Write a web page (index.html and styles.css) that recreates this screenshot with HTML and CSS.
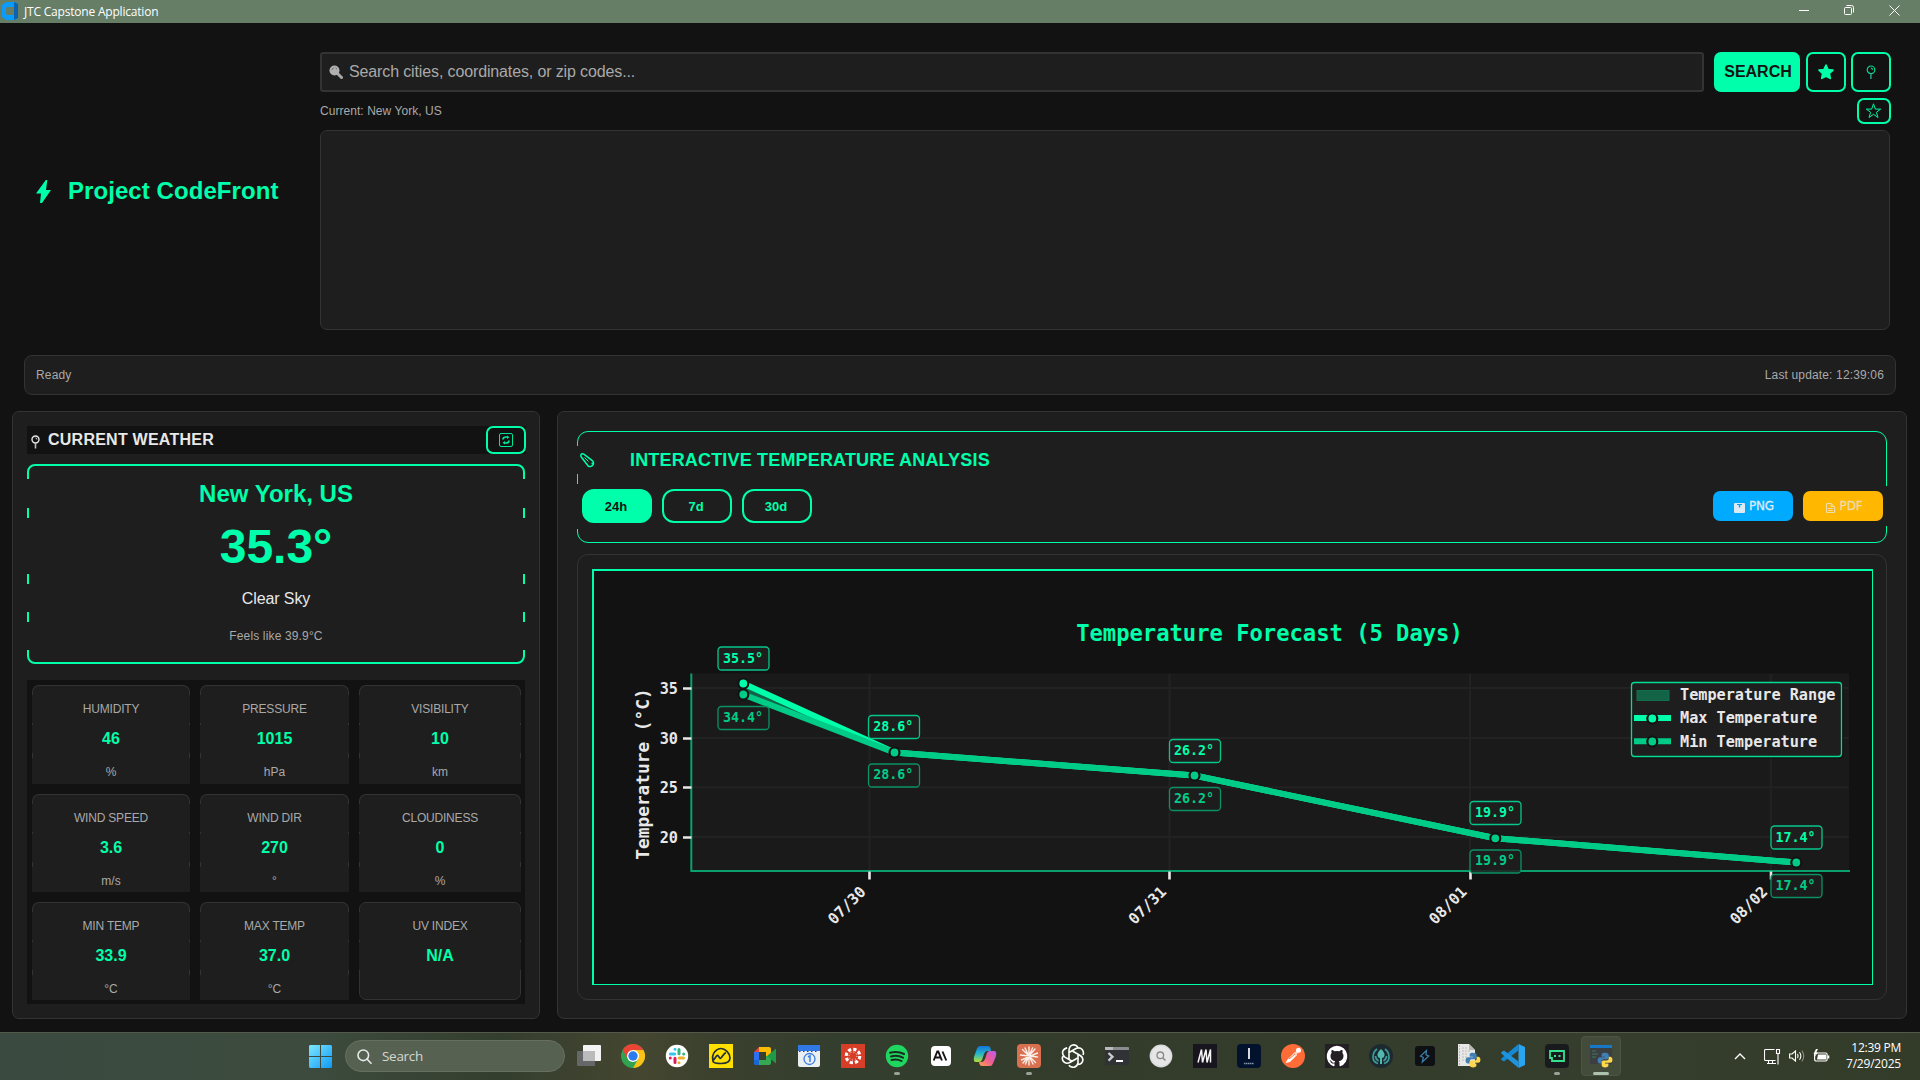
FILE: index.html
```html
<!DOCTYPE html>
<html lang="en">
<head>
<meta charset="utf-8">
<title>JTC Capstone Application</title>
<link rel="stylesheet" href="styles.css">
</head>
<body>
<div class="titlebar">
  <svg class="app-icon" width="16" height="20" viewBox="0 0 16 20"><path d="M4 1h9l3 2v14l-3 2H4l-4-3V4z" fill="#0a9bfb"/><path d="M12 1l4 2v14l-4 2z" fill="#0b62b0"/><path d="M5 6h7v8H5l-1-1V7z" fill="#667e66"/></svg>
  <span class="app-title">JTC Capstone Application</span>
  <div class="win-controls">
    <svg width="10" height="10" viewBox="0 0 10 10"><path d="M0 5.5h10" stroke="#fff"/></svg>
    <svg width="10" height="10" viewBox="0 0 10 10" fill="none" stroke="#fff"><rect x=".5" y="2.5" width="7" height="7" rx="1"/><path d="M2.5 .5h5a2 2 0 0 1 2 2v5"/></svg>
    <svg width="11" height="11" viewBox="0 0 11 11"><path d="M.5 .5l10 10M10.500 .5l-10 10" stroke="#fff"/></svg>
  </div>
</div>

<div class="app">
  <header class="header">
    <div class="brand">
      <svg width="15" height="23" viewBox="0 0 15 23"><path d="M9.800 0L0 13.500h5L4 23h2L15 10h-5L11.300 0z" fill="#00ffaa"/></svg>
      <span>Project CodeFront</span>
    </div>
    <div class="search-area">
      <div class="search-row">
        <div class="search-input">
          <svg width="14" height="14" viewBox="0 0 14 14"><path d="M8.500 8.500l4 4" stroke="#a8a8a8" stroke-width="3" stroke-linecap="round"/><circle cx="5.500" cy="5.500" r="5" fill="#b0b0b0"/><path d="M2.800 5a3 3 0 0 1 2-2.200M6.500 2.800l1.500 1.400" stroke="#666" fill="none"/></svg>
          <span>Search cities, coordinates, or zip codes...</span>
        </div>
        <button class="btn-search">SEARCH</button>
        <button class="icon-btn"><svg width="16" height="16" viewBox="0 0 16 16"><path d="M8 1l2.100 4.500 4.900.6-3.600 3.400.9 4.900L8 12.200l-4.300 2.200.9-4.900L1 6.100l4.900-.6z" fill="#00ffaa" stroke="#00ffaa" stroke-width="1.600" stroke-linejoin="round"/></svg></button>
        <button class="icon-btn pin"><svg width="10" height="15" viewBox="0 0 10 15" fill="none" stroke="#08d795"><circle cx="5" cy="4.800" r="3.800" stroke-width="1.200"/><path d="M5 3.200a1.500 1.500 0 0 1 1.500 1.500" stroke-width="1.300"/><path d="M4.900 8.600V14" stroke="#2fa083" stroke-width="1.500"/></svg></button>
      </div>
      <div class="current-row">
        <span>Current: New York, US</span>
        <button class="fav-btn"><svg width="16" height="16" viewBox="0 0 16 16"><path d="M7.500 .8l1.800 5.300h5.400l-4.300 3.200 1.600 5.200-4.500-3.200L3 14.500l1.600-5.200L.3 6.100h5.400z" fill="none" stroke="#00f5a4" stroke-width="1"/></svg></button>
      </div>
      <div class="results"></div>
    </div>
  </header>

  <div class="status"><span>Ready</span><span class="updated">Last update: 12:39:06</span></div>

  <main class="main">
    <section class="panel weather">
      <div class="weather-head">
        <svg width="10" height="14" viewBox="0 0 10 14" fill="none" stroke="#e8e8e8"><circle cx="4.500" cy="4.500" r="3.500" stroke-width="1.400"/><path d="M4.500 3a1.400 1.400 0 0 1 1.400 1.400" stroke-width="1"/><path d="M4.500 8v5.500" stroke-width="1.600" stroke="#bbb"/></svg>
        <span>CURRENT WEATHER</span>
        <button class="refresh"><svg width="14" height="14" viewBox="0 0 14 14" fill="none" stroke="#00e59a"><rect x=".5" y=".5" width="13" height="13" rx="1.500"/><path d="M4 6.500Q4 4 7 4h1.500M10 7.500Q10 10 7 10H5.500" stroke-width="1.700"/><path d="M8 2.500L10.500 4.200 8 6zM6 8L3.500 9.800 6 11.500z" fill="#00e59a" stroke="none"/></svg></button>
      </div>
      <div class="now-card">
        <div class="now-line city">New York, US</div>
        <div class="now-line temp">35.3°</div>
        <div class="now-line sky">Clear Sky</div>
        <div class="now-line feels">Feels like 39.9°C</div>
      </div>
      <div class="stats">
        <div class="stat"><div class="k">HUMIDITY</div><div class="v">46</div><div class="u">%</div></div>
        <div class="stat"><div class="k">PRESSURE</div><div class="v">1015</div><div class="u">hPa</div></div>
        <div class="stat"><div class="k">VISIBILITY</div><div class="v">10</div><div class="u">km</div></div>
        <div class="stat"><div class="k">WIND SPEED</div><div class="v">3.6</div><div class="u">m/s</div></div>
        <div class="stat"><div class="k">WIND DIR</div><div class="v">270</div><div class="u">°</div></div>
        <div class="stat"><div class="k">CLOUDINESS</div><div class="v">0</div><div class="u">%</div></div>
        <div class="stat"><div class="k">MIN TEMP</div><div class="v">33.9</div><div class="u">°C</div></div>
        <div class="stat"><div class="k">MAX TEMP</div><div class="v">37.0</div><div class="u">°C</div></div>
        <div class="stat"><div class="k">UV INDEX</div><div class="v">N/A</div></div>
      </div>
    </section>

    <section class="panel analysis">
      <div class="controls">
        <div class="controls-title">
          <svg width="17" height="16" viewBox="0 0 17 16" fill="none" stroke="#00ffaa"><path d="M1.300 1.200Q2.500 .3 3.800 1.200L12.300 7.600a3.300 3.300 0 1 1-4.300 5.200L1.300 4Q.4 2.500 1.300 1.200z" stroke-width="1.500"/><path d="M4.500 4.500l4 4" stroke-width="1"/><path d="M11.500 10.500h2" stroke-width="1.800"/></svg>
          <span>INTERACTIVE TEMPERATURE ANALYSIS</span>
        </div>
        <div class="controls-row">
          <div class="ranges">
            <button class="range on">24h</button><button class="range">7d</button><button class="range">30d</button>
          </div>
          <div class="exports">
            <button class="export png"><svg width="11" height="10" viewBox="0 0 11 10"><rect width="11" height="10" rx="1" fill="#dceaf4"/><path d="M3 1h5v1H6.200v2.500H4.800V2H3z" fill="#00a2f5"/></svg>PNG</button>
            <button class="export pdf"><svg width="9" height="10" viewBox="0 0 9 10" fill="none" stroke="#ecdcae"><path d="M.5 .5h4.800l3.200 3v6h-8z"/><path d="M5 .5v3h3M2.200 5.500h4.500M2.200 7.500h4.500"/></svg>PDF</button>
          </div>
        </div>
      </div>
      <div class="chart-frame">
        <div class="chart">
          <svg class="plot" width="1278" height="413" viewBox="594 571 1278 413">
            <rect x="691" y="673.500" width="1158" height="197.500" fill="#1a1a1a"/>
            <path class="grid" d="M869.500 674V871M1169.500 674V871M1470 674V871M1770.800 674V871M692 688H1849M692 738H1849M692 787.300H1849M692 837H1849"/>
            <path d="M743.300 683.500L894.500 752.500L743.300 694.500z" fill="#136346"/>
            <path class="series" stroke="#00ffaa" d="M743.300 683.500L894.500 752.500 1194.500 775.500 1495.300 838.300 1796.300 862.500"/>
            <circle class="dot" cx="743.300" cy="683.500" r="5" fill="#00ffaa"/>
            <path class="series" stroke="#00cc88" d="M743.300 694.500L894.500 752.500 1194.500 775.500 1495.300 838.300 1796.300 862.500"/>
            <g class="dot" fill="#00cc88"><circle cx="743.300" cy="694.500" r="5"/><circle cx="894.500" cy="752.500" r="5"/><circle cx="1194.500" cy="775.500" r="5"/><circle cx="1495.300" cy="838.300" r="5"/><circle cx="1796.300" cy="862.500" r="5"/></g>
            <path d="M691.300 673.500V871H1850" fill="none" stroke="#0aa06e" stroke-width="2"/>
            <path d="M683 688.500h8.500M683 738.500h8.500M683 787.500h8.500M683 837.500h8.500M869.500 871.500v8M1169.500 871.500v8M1470.500 871.500v8M1771 871.500v8" stroke="#e8e8e8" stroke-width="2.600"/>
            <g class="tick" text-anchor="end"><text x="678" y="693.800">35</text><text x="678" y="743.800">30</text><text x="678" y="793">25</text><text x="678" y="842.800">20</text></g>
            <g class="tick" text-anchor="middle"><text transform="translate(850.5 909) rotate(-45)">07/30</text><text transform="translate(1151 909) rotate(-45)">07/31</text><text transform="translate(1451.5 909) rotate(-45)">08/01</text><text transform="translate(1752.3 909) rotate(-45)">08/02</text></g>
            <text class="axis" text-anchor="middle" transform="translate(649 774) rotate(-90)">Temperature (°C)</text>
            <text class="chart-title" text-anchor="middle" x="1269.500" y="640.500">Temperature Forecast (5 Days)</text>
            <g class="tag hi">
              <rect x="718" y="647" width="51" height="23" rx="3.500"/><text x="743" y="663">35.5°</text>
              <rect x="868.500" y="715.500" width="51" height="23" rx="3.500"/><text x="893.200" y="731">28.6°</text>
              <rect x="1169.500" y="739.500" width="51" height="23" rx="3.500"/><text x="1194" y="755">26.2°</text>
              <rect x="1470" y="801.500" width="51" height="23" rx="3.500"/><text x="1495" y="817">19.9°</text>
              <rect x="1771" y="826" width="51" height="23" rx="3.500"/><text x="1795.500" y="842">17.4°</text>
            </g>
            <g class="tag lo">
              <rect x="718" y="706.500" width="51" height="23" rx="3.500"/><text x="743" y="722">34.4°</text>
              <rect x="868.500" y="764" width="51" height="23" rx="3.500"/><text x="893.200" y="779">28.6°</text>
              <rect x="1169.500" y="787.500" width="51" height="23" rx="3.500"/><text x="1194" y="803">26.2°</text>
              <rect x="1470" y="850" width="51" height="23" rx="3.500"/><text x="1495" y="865">19.9°</text>
              <rect x="1771" y="874.500" width="51" height="23" rx="3.500"/><text x="1795.500" y="890">17.4°</text>
            </g>
            <rect x="1633.500" y="684.500" width="210" height="74" rx="3" fill="#111"/>
            <rect x="1631.500" y="682.500" width="210" height="74" rx="3" fill="#1e1e1e" stroke="#00ffaa" stroke-opacity=".85" stroke-width="1.300"/>
            <rect x="1637" y="690.500" width="32" height="10" fill="#136346" stroke="#12704f"/>
            <path d="M1634 718h37" stroke="#00ffaa" stroke-width="6"/><path d="M1634 741.200h37" stroke="#00cc88" stroke-width="6"/>
            <g class="dot"><circle cx="1652.300" cy="718.500" r="5" fill="#00ffaa"/><circle cx="1652.300" cy="741.500" r="5" fill="#00cc88"/></g>
            <g class="tick"><text x="1680" y="699.800">Temperature Range</text><text x="1680" y="723">Max Temperature</text><text x="1680" y="746.800">Min Temperature</text></g>
          </svg>
        </div>
      </div>
    </section>
  </main>
</div>

<footer class="taskbar">
  <div class="start"><svg width="23" height="23" viewBox="0 0 23 23"><defs><linearGradient id="win" x1="0" y1="0" x2="1" y2="1"><stop offset="0" stop-color="#7ee6fd"/><stop offset="1" stop-color="#0f9af5"/></linearGradient></defs><path d="M1 0h10v11H0V1zM12 0h10l1 1v10H12zM0 12h11v11H1l-1-1zM12 12h11v10l-1 1H12z" fill="url(#win)"/></svg></div>
  <div class="task-search"><svg width="15" height="15" viewBox="0 0 15 15" fill="none" stroke="#e8eae8" stroke-width="1.600"><circle cx="6.300" cy="6.300" r="5.300"/><path d="M10 10l4 4.200" stroke-linecap="round"/></svg><span>Search</span></div>
  <div class="tasks">
    <div class="task"><svg viewBox="0 0 24 24"><rect x="0" y="7" width="18" height="15" rx="1" fill="#666768"/><rect x="6" y="1" width="18" height="16" rx="1" fill="#f3f3f3"/><rect x="6" y="7" width="12" height="10" fill="#bbb"/></svg></div>
    <div class="task"><svg viewBox="0 0 24 24"><circle cx="12" cy="12" r="12" fill="#31a350"/><path d="M1.600 6A12 12 0 0 1 22.400 6H12z" fill="#ea4434"/><path d="M22.400 6A12 12 0 0 1 12 24l5.200-9L12 6z" fill="#fbc116"/><path d="M1.600 6l5.200 9L12 6z" fill="#ea4434"/><circle cx="12" cy="12" r="6" fill="#fff"/><circle cx="12" cy="12" r="4.700" fill="#2a7bf0"/></svg></div>
    <div class="task"><svg viewBox="0 0 24 24"><circle cx="12" cy="12" r="11.200" fill="#fff"/><g stroke-width="3" stroke-linecap="round"><path d="M10 5.200v.1M5.400 10h4.300" stroke="#36c5f0"/><path d="M14 5.500v4.200M18.700 10v.1" stroke="#2eb67d"/><path d="M14.200 14h4.300M14 18.700v.1" stroke="#ecb22e"/><path d="M10 14.200v4.300M5.300 14v.1" stroke="#e01e5a"/></g></svg></div>
    <div class="task"><svg viewBox="0 0 24 24"><rect width="24" height="24" fill="#ffe000"/><path d="M4 17C2 9 8 4.500 12 4.500S21 9 21 14c0 4-4 5.500-9 5.500-4 0-8-.5-8-2.500zM4.500 16c2-2 3.300-6 4.800-4s1.700 3.500 3.500 1 2-3 3.500-4" fill="none" stroke="#23303a" stroke-width="1.700" stroke-linecap="round"/></svg></div>
    <div class="task"><svg viewBox="0 0 24 24"><path d="M6 3h10q2 0 2 2v7h-5V8H6z" fill="#fbbc04"/><path d="M1 8l5-5v5z" fill="#ea4335"/><path d="M1 8h5v13H3q-2 0-2-2z" fill="#2d6ff0"/><path d="M6 16h7v-4h5v7q0 2-2 2H6z" fill="#34a853"/><path d="M1 16h5v5H3q-2 0-2-2z" fill="#1967d2"/><path d="M14 12l9-7.500v15z" fill="#1f9a49"/></svg></div>
    <div class="task"><svg viewBox="0 0 24 24"><path d="M1 1h22v20q0 2-2 2H3q-2 0-2-2z" fill="#eceff1"/><path d="M1 1h22v6H1z" fill="#2f78e6"/><path d="M2 7.500h20" stroke="#28476f" stroke-dasharray="1.500 2.500"/><circle cx="12.500" cy="15" r="5.500" fill="none" stroke="#3b7ee2" stroke-width="1.300"/><path d="M11 13l2-1.200V18" fill="none" stroke="#3b7ee2" stroke-width="1.500"/></svg></div>
    <div class="task"><svg viewBox="0 0 24 24"><rect width="24" height="24" fill="#d63e28"/><circle cx="12" cy="12" r="6.800" fill="none" stroke="#fff" stroke-width="3" stroke-dasharray="3.300 2.040"/><circle cx="12" cy="12" r="4" fill="none" stroke="#fff" stroke-width="1" stroke-dasharray="1 2.140"/></svg></div>
    <div class="task running"><svg viewBox="0 0 24 24"><circle cx="12" cy="12" r="11.200" fill="#1fd760"/><path d="M5 8.800q7.500-2.200 14 1.200M6 12.500q6.500-1.800 12 1.200M6.500 16q5.500-1.500 10 1" fill="none" stroke="#1a2a1f" stroke-width="2" stroke-linecap="round"/></svg></div>
    <div class="task"><svg viewBox="0 0 24 24"><rect x="2" y="2" width="20" height="20" rx="4" fill="#fff"/><path d="M4.700 16.500l3.600-9h1l3.600 9M6.300 13.500h5M13.500 7.500l3.800 9" fill="none" stroke="#151515" stroke-width="1.900"/></svg></div>
    <div class="task"><svg viewBox="0 0 24 24"><defs><linearGradient id="co1" x1="0" y1="0" x2="0" y2="1"><stop offset="0" stop-color="#1475dd"/><stop offset=".5" stop-color="#25b8c9"/><stop offset="1" stop-color="#b7dc35"/></linearGradient><linearGradient id="co2" x1="1" y1="0" x2="0" y2="1"><stop offset="0" stop-color="#b75cf2"/><stop offset=".5" stop-color="#ef5b96"/><stop offset="1" stop-color="#fba24a"/></linearGradient></defs><path d="M7 2h8q2 0 2.500 2l.5 3h-4q-2 0-3 3l-2 6q-.8 2-3 2H3q-3 0-2-5L4 4.500Q5 2 7 2z" fill="url(#co1)"/><path d="M17 22H9q-2 0-2.500-2L6 18h3q2 0 3-3l2-6q.7-2 3-2h4q3 0 2 5l-3 7.500Q19 22 17 22z" fill="url(#co2)"/></svg></div>
    <div class="task running"><svg viewBox="0 0 24 24"><rect width="24" height="24" rx="4" fill="#d97050"/><path d="M12 3v18M3.500 11l17 2M5.500 5.500l13 13M18 5l-12 14M8 4l8 16M15.500 4l-7 16M4.500 16l16-7" stroke="#fbeee6" stroke-width="1.400" stroke-linecap="round"/></svg></div>
    <div class="task"><svg viewBox="0 0 24 24"><g fill="none" stroke="#fff" stroke-width="1.600" stroke-linejoin="round"><path id="petal" d="M8 15V6.500Q8 2 11.800 1q3.500-.5 5 2.200M8 8.500l7.500-4.300q3.500-1 5.700 1.300 2 2.800.8 5.500"/><use href="#petal" transform="rotate(120 12 12)"/><use href="#petal" transform="rotate(240 12 12)"/></g></svg></div>
    <div class="task"><svg viewBox="0 0 24 24"><path d="M0 3h24v17q0 1-1 1H1q-1 0-1-1z" fill="#303235"/><path d="M0 6V4q0-1 1-1h22q1 0 1 1v2z" fill="#8a8c8d"/><path d="M0 3h8v3H0z" fill="#b8babb"/><path d="M3.500 9l4 3.800-4 3.800" fill="none" stroke="#c9cbcc" stroke-width="2.300"/><path d="M11 17h7" stroke="#fff" stroke-width="2"/></svg></div>
    <div class="task"><svg viewBox="0 0 24 24"><circle cx="12" cy="12" r="11.400" fill="#d9dadb"/><circle cx="12" cy="12" r="10" fill="#e6e6e6"/><circle cx="11.300" cy="11.300" r="3.300" fill="none" stroke="#888" stroke-width="1.300"/><path d="M14 14l2.500 2.500" stroke="#888" stroke-width="1.500"/></svg></div>
    <div class="task"><svg viewBox="0 0 24 24"><rect width="24" height="24" fill="#17151d"/><path d="M5 18.500L8.500 5.500M9.500 18.500L13 5.500M14 18.500L17.500 5.500V18.500M8.500 5.500l1 13M13 5.500l1 13" fill="none" stroke="#f4f4f4" stroke-width="1.500"/></svg></div>
    <div class="task"><svg viewBox="0 0 24 24"><rect width="24" height="24" rx="4" fill="#02122d"/><path d="M12 4v11" stroke="#fff" stroke-width="1.700"/><path d="M7 19.500h10" stroke="#8995a8" stroke-width="1.600" stroke-dasharray="1.500 .5"/></svg></div>
    <div class="task"><svg viewBox="0 0 24 24"><circle cx="12" cy="12" r="12" fill="#ff6c37"/><path d="M4.500 19l2-3.500 7-7 2.500 2.500-7 7z" fill="#fff"/><path d="M12 10l4-3.500 1.500 1.500-3 4z" fill="#ffd5c5"/><circle cx="17.500" cy="6.300" r="2.500" fill="#fff"/><path d="M8 15l6-5" stroke="#ff6c37"/></svg></div>
    <div class="task"><svg viewBox="0 0 24 24"><rect width="24" height="24" fill="#231f22"/><path d="M12 1.800a10.500 10.500 0 0 0-3.300 20.400c.5.100.8-.2.800-.5v-2.200c-2.500.5-3.500-.7-3.900-1.700-.3-.8-.8-1.200-1.300-1.500 1.500-.3 2 .9 2.500 1.500.8 1.200 2 .9 2.800.6.1-.7.400-1.200.7-1.400-2.500-.3-4.800-1.300-4.800-5.300 0-1.200.4-2.100 1.100-2.800-.2-.6-.4-1.600.1-2.900 1 0 2 .6 2.900 1.200a10 10 0 0 1 4.800 0c.9-.6 1.900-1.200 2.900-1.200.5 1.300.3 2.300.1 2.900.7.700 1.100 1.600 1.100 2.800 0 4-2.400 5-4.800 5.300.5.400.8 1 .8 2v2.700c0 .3.300.6.800.5A10.500 10.500 0 0 0 12 1.800z" fill="#fff"/></svg></div>
    <div class="task"><svg viewBox="0 0 24 24"><circle cx="12" cy="12" r="12" fill="#1c292f"/><path d="M8 5Q4 8 4 13t5 6.500M16 5q4 3 4 8t-5 6.500M6.500 12q0 3 3 5M17.500 12q0 3-3 5" fill="none" stroke="#3d9a98" stroke-width="1.700"/><path d="M12 5q4 3.500 3.500 6.500Q15 14 13 14v6h-2v-6q-2 0-2.500-2.500Q8 8.500 12 5z" fill="#4fb9b0"/></svg></div>
    <div class="task"><svg viewBox="0 0 24 24"><rect x="2" y="2" width="20" height="20" rx="3" fill="#0e1013"/><path d="M13.500 6.500L7.500 12l2.800 1.500-1 4.500 6.500-6-2.800-1.200z" fill="none" stroke="#3b82ac" stroke-width="1.200"/></svg></div>
    <div class="task"><svg viewBox="0 0 24 24"><path d="M1 0h11l6 6v16H1z" fill="#e7e7e5"/><path d="M12 0v6h6z" fill="#b8b8b6"/><path d="M5 4h5M5 7h8M5 10h6M5 13h5M5 16h4M2.500 1v20" stroke="#bbb" stroke-dasharray="2 1"/><g transform="translate(8 8) scale(.67)"><path d="M11.500 1C7 1 7 3 7 4.500V7h5v1H4.500C2 8 1 10 1 12.500S2 17 4.500 17H7v-3q0-3 3-3h5q2.500 0 2.500-2.500v-4C17.500 2 15.500 1 11.500 1z" fill="#3f7fb5"/><path d="M12.500 23c4.500 0 4.500-2 4.500-3.500V17h-5v-1h7.500c2.500 0 3.500-2 3.500-4.500S22 7 19.500 7H17.500v3q0 2.500-3 2.500h-5Q7 12.500 7 15v4.500C7 22 8.500 23 12.500 23z" fill="#fdd64b"/></g></svg></div>
    <div class="task"><svg viewBox="0 0 24 24"><path d="M17.500 0L24 3v18l-6.500 3z" fill="#2aa6f0"/><path d="M17.500 0v6.500L3 17.500.3 16v-1.500z" fill="#1388d4"/><path d="M17.500 24v-6.500L3 6.500.3 8v1.500z" fill="#1f93dd"/></svg></div>
    <div class="task running"><svg viewBox="0 0 24 24"><rect width="24" height="24" rx="4" fill="#191a1e"/><path d="M5 7h14v10H7v-3H5z" fill="none" stroke="#35e28d" stroke-width="1.800"/><path d="M9 12h2M13.500 12h2" stroke="#35e28d" stroke-width="2.200"/></svg></div>
    <div class="task active"><svg viewBox="0 0 24 24"><rect x="1" y="1" width="22" height="19" fill="#3b3f41"/><path d="M1 1h22v3H1z" fill="#1878c8"/><path d="M3 7h4M3 10h6M3 13h4" stroke="#3b7a55"/><g transform="translate(8 8) scale(.67)"><path d="M11.500 1C7 1 7 3 7 4.500V7h5v1H4.500C2 8 1 10 1 12.500S2 17 4.500 17H7v-3q0-3 3-3h5q2.500 0 2.500-2.500v-4C17.500 2 15.500 1 11.500 1z" fill="#3f7fb5"/><path d="M12.500 23c4.500 0 4.500-2 4.500-3.500V17h-5v-1h7.500c2.500 0 3.500-2 3.500-4.500S22 7 19.500 7H17.500v3q0 2.500-3 2.500h-5Q7 12.500 7 15v4.500C7 22 8.500 23 12.500 23z" fill="#fdd64b"/></g></svg></div>
  </div>
  <div class="tray">
    <svg class="chev" width="12" height="7" viewBox="0 0 12 7"><path d="M1 6l5-5 5 5" fill="none" stroke="#fff" stroke-width="1.400"/></svg>
    <svg width="17" height="17" viewBox="0 0 17 17" fill="none" stroke="#fff"><path d="M10.500 1.500h-9q-1 0-1 1v9q0 1 1 1h10M4.500 12.500v3M8.500 12.500v3M3 15.500h9M12.500 1.500h3v4h-3zM14 5.500v11" stroke-width="1.100"/></svg>
    <svg width="16" height="14" viewBox="0 0 16 14" fill="none" stroke="#fff" stroke-width="1.100"><path d="M.6 5h2.400l3.500-3v10L3 9H.6z"/><path d="M8.500 5q1.300 2 0 4M10.500 3.200q2.700 3.800 0 7.600"/><path d="M12.800 1.500q4 5.500 0 11" stroke="#87907f"/></svg>
    <svg width="17" height="14" viewBox="0 0 17 14"><rect x="1.600" y="4" width="12.500" height="8" rx="1.500" fill="none" stroke="#fff" stroke-width="1.200"/><path d="M5 5.500h8v5H4zM14.500 6.500h1.800v3h-1.800z" fill="#fff"/><path d="M3 0L.5 5h2L1.500 8 5 3.500H3.200L5 0z" fill="#fff"/></svg>
    <div class="clock"><span>12:39 PM</span><span class="date">7/29/2025</span></div>
  </div>
</footer>
</body>
</html>
```
FILE: styles.css
```css
* { box-sizing: border-box; }
body {
  margin: 0; width: 1920px; height: 1080px; overflow: hidden;
  display: flex; flex-direction: column;
  background: #121212; color: #a9a9a9;
  font: 12px "Liberation Sans", Arial, sans-serif;
}
svg { display: block; flex: none; }
button { font: inherit; color: inherit; background: none; border: 0; padding: 0; display: flex; align-items: center; justify-content: center; }

.titlebar { height: 23px; flex: none; background: #667e66; display: flex; align-items: flex-start; padding: 1px 20px 0 2px; }
.app-title { margin-left: 6px; color: #fff; font: 12px/21px "Open Sans", "Noto Sans", sans-serif; letter-spacing: -.2px; }
.win-controls { margin-left: auto; display: flex; gap: 35px; padding-top: 4px; }

.app { height: 1009px; flex: none; display: flex; flex-direction: column; }
.header { display: flex; padding: 29px 29px 0 36px; height: 307px; }
.brand { width: 284px; display: flex; align-items: center; gap: 17px; color: #00ffaa; font-size: 24px; font-weight: bold; letter-spacing: .07px; }
.search-area { flex: 1; display: flex; flex-direction: column; gap: 6px; }
.search-row { display: flex; height: 40px; }
.search-input { flex: 1; display: flex; align-items: center; gap: 6px; padding: 0 7px; margin-right: 10px; background: #1e1e1e; border: 2px solid #333; border-radius: 3px; font-size: 16px; letter-spacing: -.13px; }
.btn-search { width: 86px; padding-left: 2px; background: #00ffaa; color: #121212; font-size: 16px; font-weight: bold; border-radius: 7px; margin-right: 6px; }
.icon-btn { width: 40px; border: 2px solid #00ffaa; border-radius: 7px; }
.icon-btn.pin { margin-left: 5px; }
.current-row { display: flex; height: 26px; justify-content: space-between; align-items: center; letter-spacing: .05px; }
.fav-btn { width: 34px; height: 26px; border: 2px solid #00ffaa; border-radius: 7px; }
.results { height: 200px; margin-right: 1px; border: 1px solid #333; border-radius: 7px; background: #1e1e1e; }

.status { height: 40px; margin: 25px 24px 16px; padding: 0 11px; display: flex; align-items: center; justify-content: space-between; background: #1e1e1e; border: 1px solid #333; border-radius: 8px; letter-spacing: .15px; }

.main { display: flex; gap: 17px; padding: 0 13px 0 12px; height: 608px; }
.panel { background: #1e1e1e; border: 1px solid #333; border-radius: 7px; }
.weather { width: 528px; padding: 14px 13px 0 14px; }
.weather-head { height: 28px; padding-left: 4px; display: flex; align-items: center; background: #121212; color: #e8e8e8; font-size: 16px; font-weight: bold; letter-spacing: .24px; }
.weather-head > svg { margin: 3px 7px 0 0; }
.refresh { width: 40px; height: 28px; margin-left: auto; border: 2px solid #00ffaa; border-radius: 7px; }
.now-card { height: 200px; margin: 10px 1px 16px 0; border: 2px solid #00ffaa; border-radius: 8px; padding-top: 13px; }
.now-line { position: relative; margin: 0 -2px 10px; background: #1e1e1e; height: 28px; display: flex; align-items: center; justify-content: center; }
.city { height: 29px; color: #00ffaa; font-size: 24px; font-weight: bold; }
.temp { height: 56px; color: #00ffaa; font-size: 48px; font-weight: bold; }
.sky { padding-top: 1px; color: #e8e8e8; font-size: 16px; margin-bottom: 0; letter-spacing: -.1px; }
.feels { margin-top: 10px; letter-spacing: .15px; }

.stats { height: 324px; margin-right: 1px; padding: 5px 4px 4px 5px; background: #121212; display: grid; grid-template-columns: 158px 149px 162px; grid-template-rows: 99px 98px 98px; gap: 10px; }
.stat { clip-path: inset(0); height: 100%; min-height: 0; border-radius: 7px 7px 0 0; background: #1e1e1e; border: 1px solid #333; border-bottom: 0; padding-top: 9px; text-align: center; line-height: 28px; }
.stat:last-child { border-bottom: 1px solid #333; border-radius: 7px; }
.stat div { position: relative; height: 28px; margin: 0 -1px; background: #1e1e1e; }
.stat .k { letter-spacing: -.2px; }
.stat .v { margin-top: 2px; color: #00ffaa; font-size: 16px; font-weight: bold; }
.stat .u { margin-top: 5px; }

.analysis { flex: 1; padding: 19px 19px 0; }
.controls { height: 112px; border: 1px solid #00ffaa; border-radius: 11px; padding-top: 14px; }
.controls-title { width: 500px; height: 28px; margin-left: -1px; padding-left: 3px; background: #1e1e1e; display: flex; align-items: center; gap: 33px; color: #00ffaa; font-size: 18px; font-weight: bold; letter-spacing: .17px; }
.controls-title svg { margin-top: 2px; }
.controls-row { display: flex; justify-content: space-between; margin: 10px -1px 0; }
.ranges { height: 45px; padding: 5px; display: flex; gap: 10px; background: #1e1e1e; }
.range { width: 70px; height: 34px; border: 2px solid #00ffaa; border-radius: 12px; color: #00ffaa; font-size: 13px; font-weight: bold; padding-right: 2px; }
.range.on { background: #00ffaa; color: #121212; }
.exports { height: 40px; margin-top: 2px; padding: 5px 4px; display: flex; gap: 10px; background: #1e1e1e; }
.export { width: 80px; height: 30px; padding-left: 2px; border-radius: 7px; gap: 4px; color: #dceaf4; font: 12px "DejaVu Sans", sans-serif; letter-spacing: -.2px; -webkit-text-stroke: .3px; }
.export svg { margin-top: 4px; }
.png { background: #00aaff; }
.pdf { background: #ffb700; color: #ecdcae; gap: 5px; }
.chart-frame { height: 446px; margin-top: 11px; border: 1px solid #333; border-radius: 11px; padding: 14px 13px 14px 14px; }
.chart { height: 416px; border: solid #00ffaa; border-width: 2px 1px 1px 2px; background: #121212; }
.plot text { font-family: "DejaVu Sans Mono", monospace; font-weight: bold; }
.grid { stroke: #222; stroke-width: 2; fill: none; }
.series { fill: none; stroke-width: 6; stroke-linecap: butt; }
.dot { stroke: #121212; stroke-width: 2.200; }
.tick { fill: #e8e8e8; font-size: 15.200px; }
.axis { fill: #e8e8e8; font-size: 17.800px; }
.chart-title { fill: #00ffaa; font-size: 22.150px; }
.tag rect { fill: #1e1e1e; stroke-width: 1.300; }
.tag text { font-size: 13.300px; text-anchor: middle; }
.hi rect { stroke: #06c78a; }
.hi text { fill: #00ffaa; }
.lo rect { stroke: #0a9166; fill-opacity: .85; }
.lo text { fill: #00cc88; }

.taskbar { height: 48px; flex: none; display: flex; align-items: center; border-top: 1px solid #55594b; padding: 0 0 1px 309px; background: linear-gradient(90deg, #3a4a40 0, #3c4b3d 320px, #343e2e 500px, #444630 640px, #3a402d 720px, #343e2e 830px, #333c2b 1100px, #353d2c 1600px, #333b29 1920px); }
.task-search { width: 220px; height: 32px; margin-left: 13px; padding-left: 11px; display: flex; align-items: center; gap: 10px; border: 1px solid #677060; border-radius: 16px; background: #576151; color: #d3d8d0; font: 13.500px "Open Sans", "Noto Sans", sans-serif; letter-spacing: -.3px; }
.tasks { display: flex; gap: 4px; margin-left: 4px; }
.task { position: relative; width: 40px; height: 40px; padding: 8px; border-radius: 4px; }
.task svg { width: 24px; height: 24px; }
.active { background: #434b3b; border: 1px solid #4c5445; padding: 7px; }
.running::after, .active::after { content: ""; position: absolute; left: 17px; bottom: 1px; width: 6px; height: 3px; border-radius: 2px; background: #9ba198; }
.active::after { left: 11px; bottom: 0; width: 16px; background: #abc2ab; }
.tray { margin-left: auto; display: flex; align-items: center; padding-right: 19px; gap: 8px; }
.chev { margin-right: 10px; }
.clock { display: flex; flex-direction: column; align-items: flex-end; width: 63px; color: #fff; font: 12px/16px "Open Sans", "Noto Sans", sans-serif; letter-spacing: -.25px; }
.date { letter-spacing: -.2px; }
```
